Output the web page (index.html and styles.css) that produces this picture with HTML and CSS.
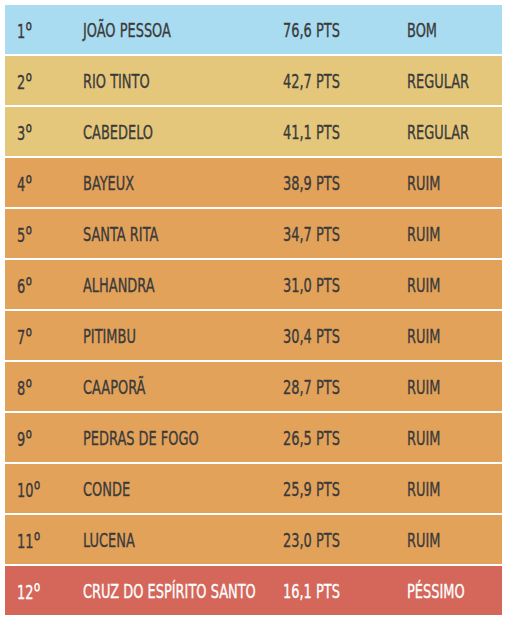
FILE: index.html
```html
<!DOCTYPE html>
<html lang="pt">
<head>
<meta charset="utf-8">
<link rel="stylesheet" href="styles.css">
</head>
<body>
<div class="ranking">
  <div class="row bom"><span class="c"><span class="t">1<span class="ord">º</span></span></span><span class="c"><span class="t">JOÃO PESSOA</span></span><span class="c"><span class="t">76,6 PTS</span></span><span class="c"><span class="t">BOM</span></span></div>
  <div class="row regular"><span class="c"><span class="t">2<span class="ord">º</span></span></span><span class="c"><span class="t">RIO TINTO</span></span><span class="c"><span class="t">42,7 PTS</span></span><span class="c"><span class="t">REGULAR</span></span></div>
  <div class="row regular"><span class="c"><span class="t">3<span class="ord">º</span></span></span><span class="c"><span class="t">CABEDELO</span></span><span class="c"><span class="t">41,1 PTS</span></span><span class="c"><span class="t">REGULAR</span></span></div>
  <div class="row ruim"><span class="c"><span class="t">4<span class="ord">º</span></span></span><span class="c"><span class="t">BAYEUX</span></span><span class="c"><span class="t">38,9 PTS</span></span><span class="c"><span class="t">RUIM</span></span></div>
  <div class="row ruim"><span class="c"><span class="t">5<span class="ord">º</span></span></span><span class="c"><span class="t">SANTA RITA</span></span><span class="c"><span class="t">34,7 PTS</span></span><span class="c"><span class="t">RUIM</span></span></div>
  <div class="row ruim"><span class="c"><span class="t">6<span class="ord">º</span></span></span><span class="c"><span class="t">ALHANDRA</span></span><span class="c"><span class="t">31,0 PTS</span></span><span class="c"><span class="t">RUIM</span></span></div>
  <div class="row ruim"><span class="c"><span class="t">7<span class="ord">º</span></span></span><span class="c"><span class="t">PITIMBU</span></span><span class="c"><span class="t">30,4 PTS</span></span><span class="c"><span class="t">RUIM</span></span></div>
  <div class="row ruim"><span class="c"><span class="t">8<span class="ord">º</span></span></span><span class="c"><span class="t">CAAPORÃ</span></span><span class="c"><span class="t">28,7 PTS</span></span><span class="c"><span class="t">RUIM</span></span></div>
  <div class="row ruim"><span class="c"><span class="t">9<span class="ord">º</span></span></span><span class="c"><span class="t">PEDRAS DE FOGO</span></span><span class="c"><span class="t">26,5 PTS</span></span><span class="c"><span class="t">RUIM</span></span></div>
  <div class="row ruim"><span class="c"><span class="t">10<span class="ord">º</span></span></span><span class="c"><span class="t">CONDE</span></span><span class="c"><span class="t">25,9 PTS</span></span><span class="c"><span class="t">RUIM</span></span></div>
  <div class="row ruim"><span class="c"><span class="t">11<span class="ord">º</span></span></span><span class="c"><span class="t">LUCENA</span></span><span class="c"><span class="t">23,0 PTS</span></span><span class="c"><span class="t">RUIM</span></span></div>
  <div class="row pessimo"><span class="c"><span class="t">12<span class="ord">º</span></span></span><span class="c"><span class="t">CRUZ DO ESPÍRITO SANTO</span></span><span class="c"><span class="t">16,1 PTS</span></span><span class="c"><span class="t">PÉSSIMO</span></span></div>
</div>
</body>
</html>
```
FILE: styles.css
```css
html, body {
  margin: 0;
  padding: 0;
  background: #ffffff;
}
body {
  padding: 5px 5px 0 5px;
  font-family: "DejaVu Sans Condensed", "DejaVu Sans", sans-serif;
  font-size: 20px;
  color: #3a3a3a;
}
.ranking {
  width: 497px;
  display: flex;
  flex-direction: column;
  gap: 2px;
}
.row {
  height: 49px;
  display: grid;
  grid-template-columns: 66px 200px 124px 1fr;
  padding-left: 12px;
  align-items: center;
}
.c {
  display: block;
  white-space: nowrap;
}
.t {
  display: inline-block;
  transform: scaleX(0.72);
  transform-origin: left center;
  -webkit-text-stroke: 0.35px currentColor;
}
.ord {
  font-family: Inter, sans-serif;
  font-size: 22px;
  font-weight: 400;
  -webkit-text-stroke: 0;
}
.bom { background: #a9dcf1; }
.regular { background: #e5c77c; }
.ruim { background: #e3a25a; }
.pessimo { background: #d4675a; color: #ffffff; }
```
